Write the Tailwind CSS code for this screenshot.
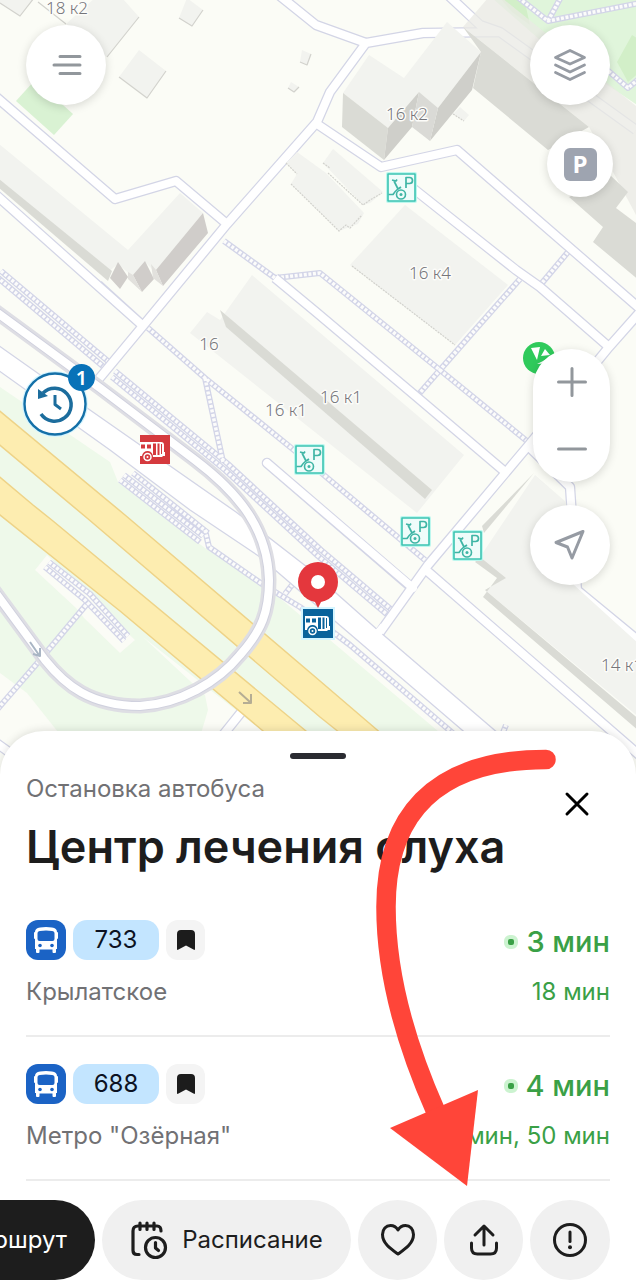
<!DOCTYPE html>
<html lang="ru">
<head>
<meta charset="utf-8">
<meta name="viewport" content="width=device-width, initial-scale=1">
<title>Центр лечения слуха</title>
<script src="https://cdn.jsdelivr.net/npm/@tailwindcss/browser@4"></script>
</head>
<body class="bg-white font-['Inter',sans-serif] text-[#1d1d1d]">
<main class="relative overflow-hidden">
  <section aria-label="Карта" class="relative h-[780px] overflow-hidden bg-[#fbfcf6]">
    <svg class="block h-full w-full" viewBox="0 0 636 780" preserveAspectRatio="xMidYMin slice" fill="none" stroke-linejoin="round">
      <defs>
        <g id="scooter">
          <rect x="-1" y="-1" width="31" height="31" rx="2" fill="#bdf7ee"/>
          <rect x="1" y="1" width="27" height="27" fill="#effcfa" stroke="#3cc4b2" stroke-width="1.600"/>
          <path d="M19 15V4.500h3.500a3 3 0 0 1 0 6H19M5 7l4 1 1-1.500M7 8l4 8 3-2M1.500 21.500h4.500q4-6 8-7" stroke="#3fb5a5" stroke-width="1.700"/>
          <circle cx="14" cy="21.500" r="4.500" stroke="#3fb5a5" stroke-width="1.600"/>
          <circle cx="14" cy="21.500" r="1.500" fill="#3fb5a5"/>
        </g>
        <g id="stop">
          <path d="M0 7h21q3 0 3 3v7h1v4h-2l-1 1H13a5.500 5.500 0 0 0-11-1H0z" fill="#fff"/>
          <path d="M1 9.500h4v4H1zM7 9.500H11v4H7zM13 8.500h3V20H13zM17.500 8.500h2V20h-2zM21 9h1v10h-1z" fill="currentColor"/>
          <circle cx="7.500" cy="22" r="3.500" fill="currentColor" stroke="#fff" stroke-width="1.500"/>
          <circle cx="7.500" cy="22" r="1" fill="#fff"/>
        </g>
        <g id="footways">
          <path d="M224 241 275 278 320 273 440 370 533 446"/>
          <path d="M520 279 475 330 418 395M568 252 542 283"/>
          <path d="M-3 277 105 368M1 271 109 362M112 377 225 470 318 556 390 617M115 371 228 464 321 550 393 611"/>
          <path d="M148 328 205 378 300 455 425 560M205 378 223 462"/>
          <path d="M120 480 200 542M124 475 203 536M133 473 208 533M205 530 209 547 262 584 300 607 350 645 455 735M285 594 292 585"/>
          <path d="M45 567 85 600 124 641M49 562 90 594 128 636M86 605 40 660-5 712"/>
          <path d="M515-5 548 21 640 3M548 21 562-5M605 68 628 88 640 78M500 740 506 725"/>
        </g>
      </defs>

      <!-- greenery -->
      <g fill="#eef9ea">
        <path d="M0 387 110 462 118 482 205 548 270 590 330 640 445 737H0z"/>
        <path d="M492-2H640V107L600 80 540 40z" fill="#e0f5db"/>
        <path d="M617 62 632 35 640 40V72L628 82z" fill="#d2efc8"/>
        <path d="M500-2 524-2 530 25 512 12z" fill="#d2efc8"/>
        <path d="M16 101 35 80 73 114 54 135z" fill="#d9f2d3"/>
      </g>
      <g fill="#fbfcf6">
        <path d="M0 673 27 693 62 737H0z"/>
        <path d="M143 637 270 737H200L208 710 205 695z"/>
        <path d="M35 570 47 555 135 640 120 653 84 618 76 608z"/>
      </g>

      <!-- footpaths -->
      <use href="#footways" stroke="#d3d5e8" stroke-width="6"/>
      <use href="#footways" stroke="#fcfcfb" stroke-width="3.500" stroke-dasharray="3 1.600"/>

      <!-- local roads: casing, then surface -->
      <g stroke="#d3d5e6" stroke-width="10.500">
        <path d="M-5 96 115 199 176 181 227 224"/>
        <path d="M275-8 316 25 366 43 423 33 500 32 636 130M448-5 480 25 500 32M366 43 330 92 317 122 227 224 142 327 98 380"/>
        <path d="M317 124 381 167 457 150 645 313"/>
        <path d="M-5 194 142 325 98 285"/>
        <path d="M405 182 516 270 540 287 609 347 640 312M609 347 528 446 428 565 378 635"/>
        <path d="M275 278 316 312 418 398 504 471"/>
        <path d="M267 463 411 587" stroke-linecap="round"/>
        <path d="M426 570 645 760M528 446 570 487 577 590 645 646"/>
        <path d="M-5 742 20 760M247 705 215 745"/>
      </g>
      <g stroke="#fff" stroke-width="8">
        <path d="M-5 96 115 199 176 181 227 224"/>
        <path d="M275-8 316 25 366 43 423 33 500 32 636 130M448-5 480 25 500 32M366 43 330 92 317 122 227 224 142 327 98 380"/>
        <path d="M317 124 381 167 457 150 645 313"/>
        <path d="M-5 194 142 325"/>
        <path d="M405 182 516 270 540 287 609 347 640 312M609 347 528 446 428 565 378 635"/>
        <path d="M275 278 316 312 418 398 504 471"/>
        <path d="M267 463 413 588" stroke-linecap="round"/>
        <path d="M426 570 645 760M528 446 570 487 577 590 645 646"/>
        <path d="M-5 742 20 760M247 705 215 745"/>
      </g>

      <!-- wide side road -->
      <path d="M-5 343 90 410 236 512 307 567 336 593 380 632 520 752H488L462 730 336 622 310 600 260 557 190 510 110 450-5 368z" fill="#fff" stroke="#d3d5e6" stroke-width="1.300"/>
      <path d="M374 638 384 626" stroke="#fff" stroke-width="8"/>

      <!-- highway -->
      <g fill="#fdedb0" stroke="#eed388" stroke-width="1.500">
        <path d="M-5 407 125 515 320 681 390 741H350L320 717 87 518-5 441z"/>
        <path d="M-5 473 33 505 53 521 318 741H275L120 611-5 511z"/>
      </g>

      <!-- ramp -->
      <path d="M-5 311 100 388 195 460C240 494 268 530 269 580C269 612 262 630 240 655C218 682 180 704 140 706C90 706 65 685 45 660L-8 588" stroke="#dedee4" stroke-width="15"/>
      <path d="M-5 311 100 388 195 460C240 494 268 530 269 580C269 612 262 630 240 655C218 682 180 704 140 706C90 706 65 685 45 660L-8 588" stroke="#d0d1de" stroke-width="10"/>
      <path d="M-5 311 100 388 195 460C240 494 268 530 269 580C269 612 262 630 240 655C218 682 180 704 140 706C90 706 65 685 45 660L-8 588" stroke="#fff" stroke-width="8"/>
      <path d="M30 642 39 655M40 648v8l-7-2" stroke="#a9b5c4" stroke-width="2"/>
      <path d="M239 692 250 702M251 694v9h-8" stroke="#b5ad94" stroke-width="2"/>

      <!-- buildings -->
      <g fill="#f2f3ef">
        <path d="M0-2H34L20 16 0 3zM95-2H122L139 17 107 57 66 24z"/>
        <path d="M139 50 166 71 147 98 119 77zM187-2 203 10 192 26 179 18zM302 50 311 54 307 65 300 62zM291 82 299 87 294 92 288 88z"/>
        <path d="M-2 143 128 250 180 193 203 213 155 272 145 262 133 277 118 264 108 272-2 180z"/>
        <path d="M343 93 369 55 404 78 447 22 481 52 438 108 419 92 388 128z"/>
        <path d="M333 149 383 192 370 203 363 205 323 163z"/>
        <path d="M297 152 326 173 364 213 358 224 339 231 291 184 297 174 286 163z"/>
        <path d="M405 205 508 285 455 345 350 265z"/>
        <path d="M252 275 464 455 417 513 190 333 207 312 220 320z"/>
        <path d="M535 475 566 502 574 585 640 645V718L485 590 505 578 478 560z"/>
        <path d="M463 27 488-2 502-2 636 106V215L589 127z" fill="#e9eae4" opacity=".75"/>
        <path d="M460 107 469 115 464 121 453 114z"/>
      </g>
      <g stroke="#d2d2cd" stroke-width="1.200">
        <path d="M0 3 20 16 34-2M38 2 66 24M107 57 139 17M119 77 147 98 166 71M179 18 192 26 203 10M300 62 307 65 311 54M288 88 294 92 299 87"/>
        <path d="M286 163 297 174M291 184 339 231 346 225 350 228 362 215M323 163 330 168M328 173 363 205 370 200 382 193M352 266 455 345M453 114 464 121" stroke-dasharray="2 1"/>
      </g>
      <g fill="#dadbd5">
        <path d="M-2 178 112 271 108 281-2 187z"/>
        <path d="M343 93 388 128 384 160 342 127z"/>
        <path d="M463 27 589 127 548 150 473 88 481 52z"/>
        <path d="M569 197 610 175 628 192 616 208 640 226V281L593 242 603 227z"/>
        <path d="M220 310 432 490 425 499 226 327z"/>
        <path d="M485 590 640 720V732L483 597 497 578 475 562 480 557 506 578z"/>
        <path d="M534 473 484 533 482 526z"/>
      </g>
      <g fill="#cfcfca">
        <path d="M388 128 419 92 412 127 384 160zM438 108 481 52 472 90 430 141z"/>
        <path d="M419 92 438 108 430 141 412 127z" fill="#dadad6"/>
        <path d="M110 278 118 262 128 277 120 289zM133 275 145 261 154 279 142 292zM156 270 203 213 208 233 163 286z" fill="#d0cdca"/>
        <path d="M128 272 133 275 142 292 128 279zM151 264 156 270 163 286 153 278z" fill="#e2e1dd"/>
      </g>

      <!-- house numbers -->
      <g fill="#75757a" stroke="#fcfcf9" stroke-width="3" paint-order="stroke" class="font-['Noto_Sans',sans-serif] text-[17px] font-light" text-anchor="middle">
        <text x="67" y="14">18 к2</text>
        <text x="407" y="120">16 к2</text>
        <text x="430" y="279">16 к4</text>
        <text x="209" y="350">16</text>
        <text x="286" y="416">16 к1</text>
        <text x="341" y="403">16 к1</text>
        <text x="622" y="671">14 к1</text>
      </g>

      <use href="#scooter" x="387" y="173"/>
      <use href="#scooter" x="295" y="445"/>
      <use href="#scooter" x="401" y="517"/>
      <use href="#scooter" x="453" y="531"/>

      <!-- recent place marker -->
      <circle cx="55" cy="404" r="33" fill="#d5f5ff"/>
      <circle cx="55" cy="404" r="30.500" fill="#fff" stroke="#1470a8" stroke-width="2.400"/>
      <path d="M41 414A16.500 16.500 0 1 0 43 393" stroke="#1c6d9d" stroke-width="3.500"/>
      <path d="M38 389v10l10-3z" fill="#1c6d9d"/>
      <path d="M55 395v9.500l6 4.500" stroke="#1c6d9d" stroke-width="3"/>
      <circle cx="81.500" cy="377.500" r="13.500" fill="#0872b8"/>
      <text x="81.500" y="385" fill="#fff" text-anchor="middle" class="font-['Noto_Sans',sans-serif] text-[20px] font-semibold">1</text>

      <!-- transport stops -->
      <g transform="translate(140 435)" color="#d53a3e"><rect width="30" height="29" fill="#d53a3e"/><use href="#stop"/></g>
      <rect x="301" y="607" width="34" height="33" fill="#d5f5ff"/>
      <g transform="translate(303 609)" color="#0a639b"><rect width="30" height="29" fill="#0a639b"/><use href="#stop" x="2"/></g>
      <path d="M314 600h8l-4 8z" fill="#e4373d"/>
      <circle cx="318" cy="582" r="20" fill="#e4373d"/>
      <circle cx="318" cy="582" r="7" fill="#fff"/>

      <circle cx="539" cy="358" r="16" fill="#2fca5b"/>
      <path d="M531 348l9-1-3 13zM541 356l4-7 5 6zM537 364l10-5 2 4z" fill="#fff"/>
    </svg>

    <button type="button" aria-label="Меню" class="absolute top-[25px] left-[26px] grid size-20 place-items-center rounded-full bg-white shadow-[0_2px_10px_rgba(0,0,0,0.15)]">
      <svg width="32" height="24" viewBox="0 0 32 24" stroke="#92979c" stroke-width="3" stroke-linecap="round"><path d="M10 3.500h20M4 12h26M10 20.500h20"/></svg>
    </button>
    <button type="button" aria-label="Слои" class="absolute top-[25px] right-[26px] grid size-20 place-items-center rounded-full bg-white shadow-[0_2px_10px_rgba(0,0,0,0.15)]">
      <svg width="34" height="34" viewBox="0 0 34 34" fill="none" stroke="#969ba3" stroke-width="2.800" stroke-linejoin="round" stroke-linecap="round"><path d="M17 2.500 31.500 9.500 17 16 2.500 9.500zM2.500 17 17 24l14.500-7M2.500 24.500 17 31.500l14.500-7"/></svg>
    </button>
    <button type="button" aria-label="Парковки" class="absolute top-[131px] right-[23px] grid size-[66px] place-items-center rounded-full bg-white shadow-[0_2px_10px_rgba(0,0,0,0.15)]">
      <span class="grid size-[33px] place-items-center rounded-md bg-[#9ea4b0] font-['Open_Sans',sans-serif] text-2xl leading-none font-bold text-white">P</span>
    </button>
    <div class="absolute top-[349px] right-[26px] flex h-[133px] w-[77px] flex-col rounded-full bg-white shadow-[0_2px_10px_rgba(0,0,0,0.15)]">
      <button type="button" aria-label="Приблизить" class="grid flex-1 place-items-center">
        <svg width="32" height="32" viewBox="0 0 32 32" stroke="#92979c" stroke-width="3" stroke-linecap="round"><path d="M2.500 16h27M16 2.500v27"/></svg>
      </button>
      <button type="button" aria-label="Отдалить" class="grid flex-1 place-items-center">
        <svg width="32" height="32" viewBox="0 0 32 32" stroke="#92979c" stroke-width="3" stroke-linecap="round"><path d="M2.500 16h27"/></svg>
      </button>
    </div>
    <button type="button" aria-label="Моё местоположение" class="absolute top-[505px] right-[26px] grid size-20 place-items-center rounded-full bg-white shadow-[0_2px_10px_rgba(0,0,0,0.15)]">
      <svg width="34" height="34" viewBox="0 0 34 34" fill="none" stroke="#969ba3" stroke-width="3" stroke-linejoin="round"><path d="M30 3.500 3 14.500 14.500 19 19 30z"/></svg>
    </button>
  </section>

  <section class="relative -mt-[49px] rounded-t-[44px] bg-white shadow-[0_-1px_8px_rgba(0,0,0,0.12)]">
    <div class="flex justify-center pt-[22px]"><span class="h-[6px] w-14 rounded-full bg-[#2a2b31]"></span></div>

    <header class="flex items-start justify-between px-[26px] pt-[14px]">
      <div>
        <p class="text-2xl leading-8 text-[#717174]">Остановка автобуса</p>
        <h1 class="mt-3 text-[45px] leading-[60px] font-semibold whitespace-nowrap">Центр лечения слуха</h1>
      </div>
      <button type="button" aria-label="Закрыть" class="mt-4 -ml-20 grid h-[30px] w-[66px] shrink-0 place-items-center text-black">
        <svg width="26" height="26" viewBox="0 0 26 26" stroke="currentColor" stroke-width="3" stroke-linecap="round"><path d="M3 3l20 20M23 3L3 23"/></svg>
      </button>
    </header>

    <svg class="hidden">
      <symbol id="bus" viewBox="0 0 40 40">
        <path fill="#fff" d="M9 12q0-4 5-4.500 6-.8 12 0 5 .5 5 4.500 1 0 1 1v5q0 1-1 1v10h-1v3q0 1-1 1h-1.500q-1 0-1-1v-2.500h-13V32q0 1-1 1H11q-1 0-1-1v-3H9V19q-1 0-1-1v-5q0-1 1-1z"/>
        <path fill="#1b63c5" d="M14 11q6-1 12 0 2.500 0 2.500 2.500V19q0 2-2 2h-13q-2 0-2-2v-5.500Q11.500 11 14 11z"/>
        <circle cx="14" cy="25.500" r="1.800" fill="#1b63c5"/><circle cx="26" cy="25.500" r="1.800" fill="#1b63c5"/>
      </symbol>
      <symbol id="mark" viewBox="0 0 18 20"><path fill="#1c1c1c" d="M0 4q0-4 4-4h10q4 0 4 4v15q0 1.500-1.500.6L9 15.500l-7.500 4.100Q0 20.500 0 19z"/></symbol>
    </svg>

    <ul class="px-[26px] pt-[43px]">
      <li class="flex h-[117px] items-start justify-between border-b-2 border-[#ececec]">
        <div>
          <div class="flex h-10 gap-[7px]">
            <svg class="size-10 rounded-xl bg-[#1b63c5]"><use href="#bus"/></svg>
            <a href="#733" class="grid w-[86px] place-items-center rounded-[14px] bg-[#c3e5ff] text-2xl text-[#0c1222]">733</a>
            <button type="button" aria-label="Сохранить маршрут 733" class="grid w-[39px] place-items-center rounded-xl bg-[#f4f4f4]"><svg class="h-5 w-[18px]"><use href="#mark"/></svg></button>
          </div>
          <p class="mt-4 text-2xl leading-8 text-[#717174]">Крылатское</p>
        </div>
        <div class="text-right text-[#3aa046]">
          <p class="flex h-11 items-center justify-end gap-2 text-[29px] font-medium"><span class="size-[14px] rounded-[6px] border-4 border-[#ccf3d0] bg-[#3aa046]"></span>3 мин</p>
          <p class="mt-3 text-2xl leading-8">18 мин</p>
        </div>
      </li>
      <li class="mt-[27px] flex h-[117px] items-start justify-between border-b-2 border-[#ececec]">
        <div>
          <div class="flex h-10 gap-[7px]">
            <svg class="size-10 rounded-xl bg-[#1b63c5]"><use href="#bus"/></svg>
            <a href="#688" class="grid w-[86px] place-items-center rounded-[14px] bg-[#c3e5ff] text-2xl text-[#0c1222]">688</a>
            <button type="button" aria-label="Сохранить маршрут 688" class="grid w-[39px] place-items-center rounded-xl bg-[#f4f4f4]"><svg class="h-5 w-[18px]"><use href="#mark"/></svg></button>
          </div>
          <p class="mt-4 text-2xl leading-8 text-[#717174]">Метро "Озёрная"</p>
        </div>
        <div class="text-right text-[#3aa046]">
          <p class="flex h-11 items-center justify-end gap-2 text-[29px] font-medium"><span class="size-[14px] rounded-[6px] border-4 border-[#ccf3d0] bg-[#3aa046]"></span>4 мин</p>
          <p class="mt-3 text-2xl leading-8">мин, 50 мин</p>
        </div>
      </li>
    </ul>

    <div class="mt-[19px] flex justify-end gap-[7px] overflow-hidden pr-[26px] text-2xl">
      <button type="button" class="flex h-20 shrink-0 items-center rounded-full bg-[#1d1d1d] px-7 text-white">Маршрут</button>
      <button type="button" class="flex h-20 w-[249px] shrink-0 items-center justify-center gap-[14px] rounded-full bg-[#f0f0f0]">
        <svg width="38" height="40" viewBox="0 0 38 40" fill="none" stroke="currentColor" stroke-width="3.200" stroke-linecap="round" stroke-linejoin="round"><path d="M9 34.500H7q-4 0-4-4V11q0-5 5-5h19q4 0 4 5M10 3v6.500M17 3v6.500M24 3v6.500"/><circle cx="25.500" cy="27.500" r="10"/><path d="M25.500 22.500v5.500l3 2.500"/></svg>
        Расписание
      </button>
      <button type="button" aria-label="В избранное" class="grid h-20 w-[79px] shrink-0 place-items-center rounded-full bg-[#f0f0f0]">
        <svg width="36" height="34" viewBox="0 0 36 34" fill="none" stroke="currentColor" stroke-width="3" stroke-linejoin="round"><path d="M18 31C11 26 2.500 20.500 2.500 11.500C2.500 6 6 2.500 10.500 2.500C14 2.500 16.500 4.500 18 7C19.500 4.500 22 2.500 25.500 2.500C30 2.500 33.500 6 33.500 11.500C33.500 20.500 25 26 18 31z"/></svg>
      </button>
      <button type="button" aria-label="Поделиться" class="grid h-20 w-[79px] shrink-0 place-items-center rounded-full bg-[#f0f0f0]">
        <svg width="32" height="34" viewBox="0 0 32 34" fill="none" stroke="currentColor" stroke-width="3" stroke-linecap="round" stroke-linejoin="round"><path d="M16 22V3.500M7 12l9-9 9 9M3.500 20v5q0 6 6 6h13q6 0 6-6v-5"/></svg>
      </button>
      <button type="button" aria-label="Сообщить о проблеме" class="grid h-20 w-20 shrink-0 place-items-center rounded-full bg-[#f0f0f0]">
        <svg width="36" height="36" viewBox="0 0 36 36" fill="none" stroke="currentColor" stroke-width="3" stroke-linecap="round"><circle cx="18" cy="18" r="15.500"/><path d="M18 10v9.500"/><circle cx="18" cy="25.200" r="2" fill="currentColor" stroke="none"/></svg>
      </button>
    </div>
  </section>

  <!-- hint arrow pointing at the share button -->
  <svg class="pointer-events-none absolute top-[740px] right-[80px]" width="176" height="450" viewBox="380 740 176 450" fill="none" overflow="visible">
    <path d="M546 759.500C430 759.500 386 820 386 907C386 970 404 1040 436 1112" stroke="#ff4539" stroke-width="19.500" stroke-linecap="round"/>
    <path d="M478 1090 390 1128 467 1186z" fill="#ff4539"/>
  </svg>
</main>
</body>
</html>
